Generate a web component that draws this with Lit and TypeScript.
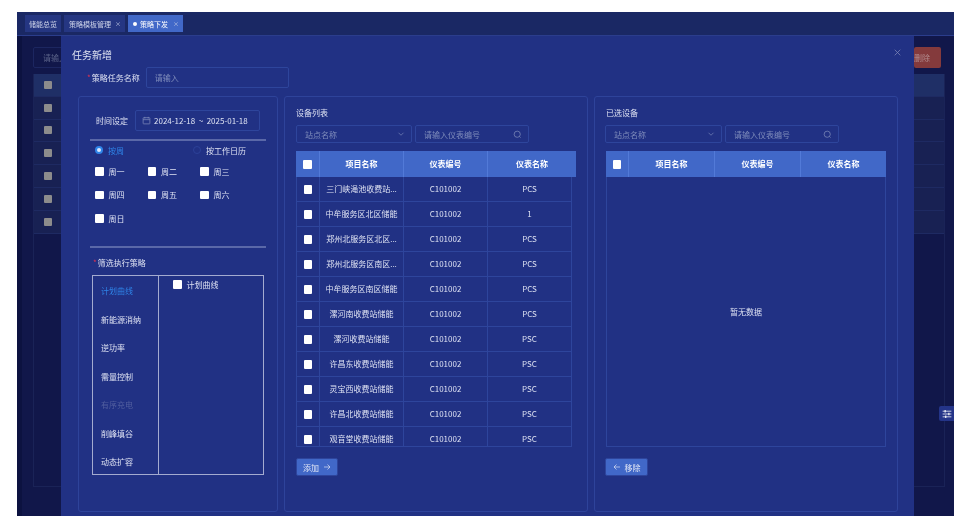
import { LitElement, html, css, svg } from "lit";
import { customElement } from "lit/decorators.js";

const DEVICES = [
  ["三门峡渑池收费站...", "C101002", "PCS"],
  ["中牟服务区北区储能", "C101002", "1"],
  ["郑州北服务区北区...", "C101002", "PCS"],
  ["郑州北服务区南区...", "C101002", "PCS"],
  ["中牟服务区南区储能", "C101002", "PCS"],
  ["漯河南收费站储能", "C101002", "PCS"],
  ["漯河收费站储能", "C101002", "PSC"],
  ["许昌东收费站储能", "C101002", "PSC"],
  ["灵宝西收费站储能", "C101002", "PSC"],
  ["许昌北收费站储能", "C101002", "PSC"],
  ["观音堂收费站储能", "C101002", "PSC"],
];

const STRATEGIES = ["计划曲线", "新能源消纳", "逆功率", "需量控制", "有序充电", "削峰填谷", "动态扩容"];
const DAYS = ["周一", "周二", "周三", "周四", "周五", "周六", "周日"];

const icon = (size: number, body: unknown) => html`
  <svg class="icon" width=${size} height=${size} viewBox="0 0 16 16" fill="none" stroke="currentColor" stroke-width="1.3">${body}</svg>
`;
const calendarIcon = () => icon(9, svg`<rect x="2" y="3" width="12" height="11" rx="1"/><path d="M2 6.5h12M5 1.5v3M11 1.5v3"/>`);
const chevronIcon = () => icon(8, svg`<path d="M3 5.5l5 5 5-5"/>`);
const searchIcon = () => icon(9, svg`<circle cx="7.5" cy="7.5" r="5.5"/><path d="M11.5 11.5l2 2"/>`);
const rightIcon = () => icon(8, svg`<path d="M2 8h12M9 3l5 5-5 5"/>`);
const leftIcon = () => icon(8, svg`<path d="M14 8H2M7 3L2 8l5 5"/>`);
const closeIcon = () => icon(9, svg`<path d="M3 3l10 10M13 3L3 13"/>`);
const slidersIcon = () => icon(10, svg`<path d="M1 3.5h14M1 8h14M1 12.5h14" stroke-width="1.2"/><path d="M5 1.5v4M11 6v4M6 10.5v4" stroke-width="1.8"/>`);

@customElement("app-root")
export class AppRoot extends LitElement {
  static styles = css`
    :host {
      display: block;
      height: 516px;
      padding: 12px 10px 0 17px;
      box-sizing: border-box;
      background: #fff;
      font-family: "Noto Sans CJK SC", "Noto Sans", sans-serif;
      font-size: 8px;
      color: #dde1f2;
      overflow: hidden;
    }
    .icon { display: block; flex: none; }
    .shell {
      position: relative;
      height: 504px;
      background: #11174a;
      overflow: hidden;
      display: flex;
      flex-direction: column;
      filter: blur(0.35px);
    }

    .tabs {
      display: flex;
      gap: 3px;
      height: 24px;
      box-sizing: border-box;
      padding: 3px 0 0 8px;
      background: #1a2864;
      border-bottom: 1px solid #2b3d8c;
      flex: none;
      font-size: 7px;
    }
    .tab {
      display: flex;
      align-items: center;
      gap: 4px;
      height: 17px;
      padding: 0 4px;
      background: #253682;
      color: #cfd5ea;
    }
    .tab.closable { padding: 0 4px 0 5px; }
    .tab.active { background: #4168c8; color: #fff; gap: 5px; }
    .tab .dot { width: 4px; height: 4px; border-radius: 50%; background: #fff; margin-right: -2px; }
    .tab .x { font-size: 6px; color: #bfc7e4; }

    .page {
      flex: 1;
      display: flex;
      min-height: 0;
    }
    .side { width: 5px; background: #0c1240; flex: none; }
    .content {
      flex: 1;
      padding: 11px 9px 29px 11px;
      display: flex;
      flex-direction: column;
      min-width: 0;
    }
    .toolbar {
      display: flex;
      justify-content: space-between;
      height: 21px;
      margin-bottom: 6px;
      flex: none;
    }
    .bg-input {
      width: 90px;
      border: 1px solid #1c2660;
      border-radius: 2px;
      padding-left: 9px;
      line-height: 19px;
      color: #5a6288;
    }
    .bg-delete {
      width: 27px;
      background: #843a3c;
      border-radius: 2px;
      margin-right: 4px;
      color: #b28b8e;
      line-height: 21px;
      text-align: right;
      padding-right: 12px;
      box-sizing: border-box;
      white-space: nowrap;
    }
    .bg-table {
      flex: 1;
      border: 1px solid #1a2357;
      border-top: 0;
    }
    .bg-row {
      height: 22.8px;
      background: #182153;
      border-bottom: 1px solid #1e2a62;
      box-sizing: border-box;
      display: flex;
      align-items: center;
      padding-left: 10px;
    }
    .bg-row.head { background: #1f2f66; }
    .bg-check { width: 8px; height: 8px; background: #8c8c8c; border-radius: 1px; }

    .float {
      position: absolute;
      right: 0;
      top: 394px;
      width: 15px;
      height: 15px;
      display: flex;
      align-items: center;
      justify-content: center;
      background: #243488;
      border-radius: 2px 0 0 2px;
      color: #fff;
    }

    .modal {
      position: absolute;
      left: 44px;
      top: 24px;
      width: 853px;
      bottom: 0;
      box-sizing: border-box;
      padding: 12px 17px 0;
      background: #213184;
    }
    .modal-title { font-size: 10px; line-height: 14px; margin-left: -6px; color: #dfe3f2; }
    .close { position: absolute; right: 12px; top: 12px; color: #7f88b8; }
    .name-row {
      display: flex;
      align-items: center;
      gap: 6px;
      margin: 5px 0 8px 9px;
    }
    .req { color: #e0314f; margin-right: 1px; }
    .field {
      height: 21px;
      box-sizing: border-box;
      border: 1px solid #2e459c;
      border-radius: 2px;
      display: flex;
      align-items: center;
      color: #7f8cbb;
      padding: 0 8px;
    }
    .name-input { width: 143px; }

    .columns { display: flex; gap: 6px; height: 416px; }
    .panel {
      border: 1px solid #2e439a;
      border-radius: 3px;
      box-sizing: border-box;
      width: 304px;
      flex: none;
      padding: 10px 11px;
      display: flex;
      flex-direction: column;
    }
    .panel.left { width: 200px; padding: 13px 11px 0; }

    .date-row { display: flex; align-items: center; gap: 7px; padding-left: 6px; }
    .date {
      width: 125px;
      gap: 3px;
      padding: 0 6px;
      color: #dde1f2;
      white-space: pre;
    }
    .date .icon { color: #7f8cbb; }
    .rule { height: 1.5px; background: #5a68a8; margin-top: 8px; flex: none; }
    .radios { display: flex; height: 19px; align-items: center; padding-left: 5px; flex: none; }
    .radio { display: flex; align-items: center; gap: 5px; }
    .radio:first-child { width: 98px; color: #2f84e8; }
    .dot-r {
      width: 8px;
      height: 8px;
      border-radius: 50%;
      box-sizing: border-box;
      border: 1px solid #2c4198;
    }
    .radio:first-child .dot-r { border: 2.5px solid #2f84e8; background: #dbe8ff; }
    .days {
      display: grid;
      grid-template-columns: repeat(3, 52.5px);
      grid-auto-rows: 23.5px;
      padding-left: 5px;
      align-items: center;
      flex: none;
    }
    .check { display: flex; align-items: center; gap: 5px; }
    .box { width: 8.5px; height: 8.5px; background: #fff; border-radius: 1px; flex: none; display: block; }
    .rule.two { margin-top: 16px; }
    .pick-label { margin: 9px 0 6.5px 3px; line-height: 12px; }
    .pick {
      display: flex;
      width: 172px;
      height: 200px;
      margin-left: 2px;
      box-sizing: border-box;
      border: 1px solid #a4abd0;
      flex: none;
    }
    .pick-nav {
      width: 66px;
      flex: none;
      box-sizing: border-box;
      border-right: 1px solid #a4abd0;
      padding: 1px 0 0 8px;
    }
    .pick-nav div { height: 28.5px; line-height: 28.5px; }
    .pick-nav .on { color: #2f84e8; }
    .pick-nav .off { color: #525f9f; }
    .pick-main { padding: 3px 0 0 14px; }

    .panel-title { line-height: 12px; margin-bottom: 6px; }
    .filters { display: flex; gap: 3px; margin-bottom: 8px; }
    .filters .field { height: 18px; justify-content: space-between; padding: 0 6px 0 8px; }
    .select { width: 116px; }
    .search { width: 114px; }

    .table { width: 280px; height: 296px; flex: none; }
    .table-body {
      width: 276px;
      height: 270px;
      box-sizing: border-box;
      overflow: hidden;
      border: 1px solid #2e459c;
      border-top: 0;
    }
    .tr {
      display: grid;
      grid-template-columns: 22px 84px 84px 84px;
      height: 25px;
      box-sizing: border-box;
      border-bottom: 1px solid #2e459c;
    }
    .tr.head {
      height: 26px;
      width: 280px;
      grid-template-columns: 23px 84px 84px 89px;
      background: #4168c8;
      border: 0;
      color: #fff;
      font-weight: 700;
    }
    .tr.head.narrow { grid-template-columns: 22px 86px 86px 86px; }
    .cell {
      display: flex;
      align-items: center;
      justify-content: center;
      padding: 0 5px 1px;
      min-width: 0;
      white-space: nowrap;
      border-left: 1px solid #2e459c;
    }
    .head .cell { border-left-color: #527ad8; }
    .cell:first-child { border-left: 0; padding: 1px 0 0; }
    .btn {
      display: inline-flex;
      align-items: center;
      justify-content: center;
      align-self: flex-start;
      gap: 4px;
      height: 18px;
      margin-top: 11px;
      background: #4168c8;
      border: 1px solid #2e459c;
      border-radius: 2px;
      box-sizing: border-box;
      color: #e4e8f6;
      width: 42px;
    }

    .empty {
      width: 280px;
      height: 270px;
      box-sizing: border-box;
      border: 1px solid #2e459c;
      border-top: 0;
      display: flex;
      align-items: center;
      justify-content: center;
    }
    .right .btn { width: 43px; margin-left: -1px; }
    .right .filters { margin-left: -1px; }
    .right .filters .select { width: 117px; }
  `;

  private renderFilters() {
    return html`
      <div class="filters">
        <div class="field select"><span>站点名称</span>${chevronIcon()}</div>
        <div class="field search"><span>请输入仪表编号</span>${searchIcon()}</div>
      </div>
    `;
  }

  private renderHead(extra = "") {
    return html`
      <div class="tr head ${extra}">
        <div class="cell"><i class="box"></i></div>
        <div class="cell">项目名称</div>
        <div class="cell">仪表编号</div>
        <div class="cell">仪表名称</div>
      </div>
    `;
  }

  private renderBackdrop() {
    return html`
      <div class="page">
        <div class="side"></div>
        <div class="content">
          <div class="toolbar">
            <div class="bg-input">请输入</div>
            <div class="bg-delete">删除</div>
          </div>
          <div class="bg-table">
            ${Array.from({ length: 7 }, (_, i) => html`
              <div class="bg-row ${i === 0 ? "head" : ""}"><i class="bg-check"></i></div>
            `)}
          </div>
        </div>
      </div>
      <div class="float">${slidersIcon()}</div>
    `;
  }

  private renderLeft() {
    return html`
      <section class="panel left">
        <div class="date-row">
          <span>时间设定</span>
          <div class="field date">${calendarIcon()}<span>2024-12-18  ~  2025-01-18</span></div>
        </div>
        <div class="rule"></div>
        <div class="radios">
          <label class="radio"><i class="dot-r"></i>按周</label>
          <label class="radio"><i class="dot-r"></i>按工作日历</label>
        </div>
        <div class="days">
          ${DAYS.map((d) => html`<label class="check"><i class="box"></i>${d}</label>`)}
        </div>
        <div class="rule two"></div>
        <div class="pick-label"><span class="req">*</span>筛选执行策略</div>
        <div class="pick">
          <div class="pick-nav">
            ${STRATEGIES.map((s, i) => html`<div class=${i === 0 ? "on" : i === 4 ? "off" : ""}>${s}</div>`)}
          </div>
          <div class="pick-main">
            <label class="check"><i class="box"></i>计划曲线</label>
          </div>
        </div>
      </section>
    `;
  }

  render() {
    return html`
      <div class="shell">
        <nav class="tabs">
          <div class="tab">储能总览</div>
          <div class="tab closable">策略模板管理<span class="x">×</span></div>
          <div class="tab closable active"><i class="dot"></i>策略下发<span class="x">×</span></div>
        </nav>
        ${this.renderBackdrop()}

        <div class="modal">
          <div class="modal-title">任务新增</div>
          <div class="close">${closeIcon()}</div>
          <div class="name-row">
            <span><span class="req">*</span>策略任务名称</span>
            <div class="field name-input">请输入</div>
          </div>
          <div class="columns">
            ${this.renderLeft()}
            <section class="panel">
              <div class="panel-title">设备列表</div>
              ${this.renderFilters()}
              <div class="table">
                ${this.renderHead()}
                <div class="table-body">
                  ${DEVICES.map((d) => html`
                    <div class="tr">
                      <div class="cell"><i class="box"></i></div>
                      <div class="cell">${d[0]}</div>
                      <div class="cell">${d[1]}</div>
                      <div class="cell">${d[2]}</div>
                    </div>
                  `)}
                </div>
              </div>
              <div class="btn">添加 ${rightIcon()}</div>
            </section>
            <section class="panel right">
              <div class="panel-title">已选设备</div>
              ${this.renderFilters()}
              <div class="table">
                ${this.renderHead("narrow")}
                <div class="empty">暂无数据</div>
              </div>
              <div class="btn">${leftIcon()} 移除</div>
            </section>
          </div>
        </div>
      </div>
    `;
  }
}
